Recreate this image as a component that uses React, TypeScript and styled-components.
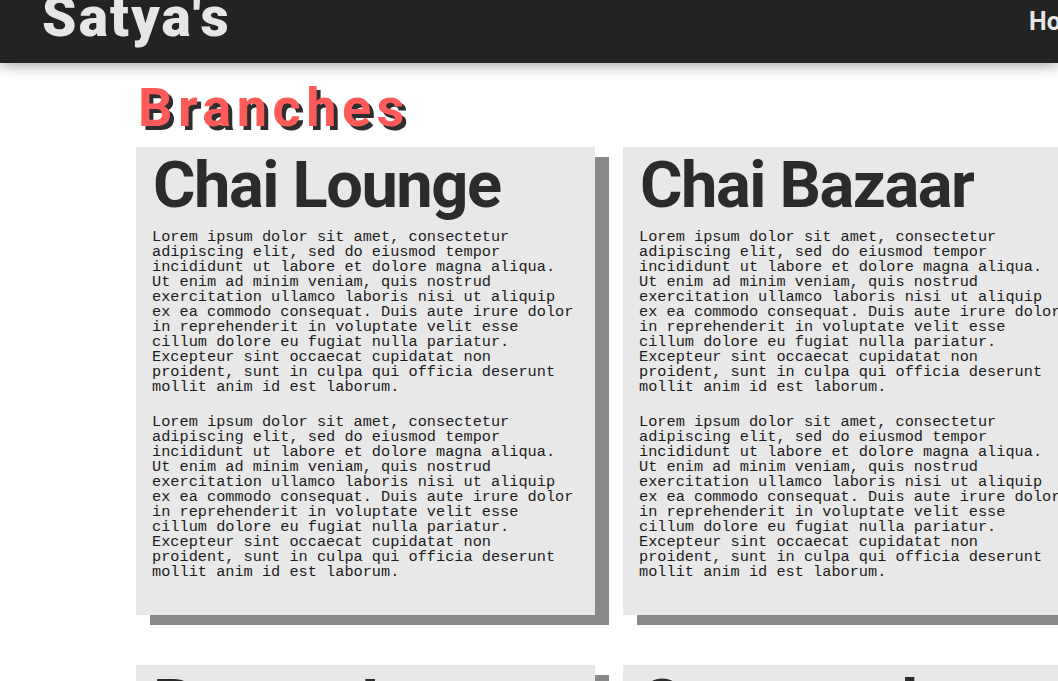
import React from "react";
import styled, { createGlobalStyle } from "styled-components";

const Global = createGlobalStyle`
  html, body { margin: 0; padding: 0; overflow: hidden; background: #ffffff; }
  body { font-family: Roboto, "Liberation Sans", sans-serif; }
`;

const Page = styled.div`
  width: 1058px;
  height: 681px;
  overflow: hidden;
  display: flex;
  flex-direction: column;
`;

const Header = styled.header`
  position: relative;
  z-index: 2;
  flex: 0 0 63px;
  display: flex;
  align-items: flex-start;
  padding-left: 42px;
  background: #232322;
  box-shadow: 0 2px 14px rgba(0, 0, 0, 0.38);
  overflow: hidden;
`;

const Brand = styled.div`
  flex: 0 0 987px;
  margin-top: -10px;
  font-family: Roboto, sans-serif;
  font-weight: 900;
  font-size: 55px;
  line-height: 55px;
  letter-spacing: 2.2px;
  color: #e6e6e6;
`;

const Nav = styled.nav`
  display: flex;
  gap: 28px;
  flex-shrink: 0;
  white-space: nowrap;
  padding-top: 9px;
`;

const NavLink = styled.span`
  font-family: Roboto, sans-serif;
  font-weight: 700;
  font-size: 25px;
  line-height: 25px;
  color: #e6e6e6;
`;

const Main = styled.main`
  padding: 18px 0 0 136px;
`;

const Title = styled.h1`
  margin: 0 0 12px 2px;
  font-family: Roboto, sans-serif;
  font-weight: 700;
  font-size: 54px;
  line-height: 54px;
  letter-spacing: 5.5px;
  color: #ff5a5a;
  text-shadow: 4px 4px 0 #2e2e2e;
`;

const Grid = styled.div`
  display: grid;
  grid-template-columns: repeat(2, 459px);
  column-gap: 28px;
  row-gap: 50px;
`;

const Card = styled.section`
  background: #e8e8e8;
  box-shadow: 14px 10px 0 #888888;
  padding: 6px 16px 16px;
  height: 468px;
  box-sizing: border-box;
`;

const CardTitle = styled.h2`
  margin: 0 0 12px 1px;
  font-family: Roboto, sans-serif;
  font-weight: 700;
  font-size: 65px;
  line-height: 65px;
  letter-spacing: -1.5px;
  color: #2b2b2b;
  white-space: nowrap;
`;

const Text = styled.p`
  margin: 0 0 20px;
  font-family: "Courier New", "Nimbus Mono PS", "FreeMono", Courier, "Liberation Mono", monospace;
  font-size: 15.27px;
  line-height: 15px;
  color: #1c1c1c;
`;

const lorem =
  "Lorem ipsum dolor sit amet, consectetur adipiscing elit, sed do eiusmod tempor incididunt ut labore et dolore magna aliqua. Ut enim ad minim veniam, quis nostrud exercitation ullamco laboris nisi ut aliquip ex ea commodo consequat. Duis aute irure dolor in reprehenderit in voluptate velit esse cillum dolore eu fugiat nulla pariatur. Excepteur sint occaecat cupidatat non proident, sunt in culpa qui officia deserunt mollit anim id est laborum.";

const branches = ["Chai Lounge", "Chai Bazaar", "Bazaar Lane", "Courtyard"];

export default function App() {
  return (
    <Page>
      <Global />
      <Header>
        <Brand>Satya's</Brand>
        <Nav>
          <NavLink>Home</NavLink>
          <NavLink>Branches</NavLink>
          <NavLink>Menu</NavLink>
        </Nav>
      </Header>
      <Main>
        <Title>Branches</Title>
        <Grid>
          {branches.map((b) => (
            <Card key={b}>
              <CardTitle>{b}</CardTitle>
              <Text>{lorem}</Text>
              <Text>{lorem}</Text>
            </Card>
          ))}
        </Grid>
      </Main>
    </Page>
  );
}
